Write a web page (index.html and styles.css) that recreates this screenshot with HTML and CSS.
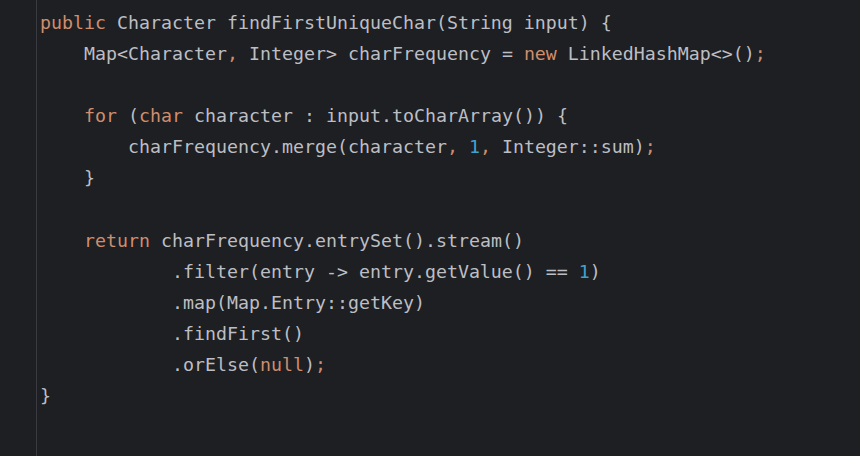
FILE: index.html
```html
<!DOCTYPE html>
<html>
<head>
<meta charset="utf-8">
<link rel="stylesheet" href="styles.css">
</head>
<body>
<div class="editor">
  <div class="gutter"></div>
  <pre class="code"><span class="kw">public</span> Character findFirstUniqueChar(String input) {
    Map&lt;Character<span class="kw">,</span> Integer&gt; charFrequency = <span class="kw">new</span> LinkedHashMap&lt;&gt;()<span class="kw">;</span>

    <span class="kw">for</span> (<span class="kw">char</span> character : input.toCharArray()) {
        charFrequency.merge(character<span class="kw">,</span> <span class="num">1</span><span class="kw">,</span> Integer::sum)<span class="kw">;</span>
    }

    <span class="kw">return</span> charFrequency.entrySet().stream()
            .filter(entry -&gt; entry.getValue() == <span class="num">1</span>)
            .map(Map.Entry::getKey)
            .findFirst()
            .orElse(<span class="kw">null</span>)<span class="kw">;</span>
}</pre>
</div>
</body>
</html>
```

FILE: styles.css
```css
html, body {
  margin: 0;
  padding: 0;
  background: #1e1f22;
}
.editor {
  display: flex;
  height: 456px;
  background: #1e1f22;
  overflow: hidden;
}
.gutter {
  width: 36px;
  flex: none;
  border-right: 1px solid #393b40;
}
.code {
  margin: 0;
  padding: 7px 0 0 3px;
  font-family: "DejaVu Sans Mono", monospace;
  font-size: 18.27px;
  line-height: 31.08px;
  color: #bcbec4;
  white-space: pre;
}
.kw {
  color: #cf8e6d;
}
.num {
  color: #3fa2d0;
}
```
